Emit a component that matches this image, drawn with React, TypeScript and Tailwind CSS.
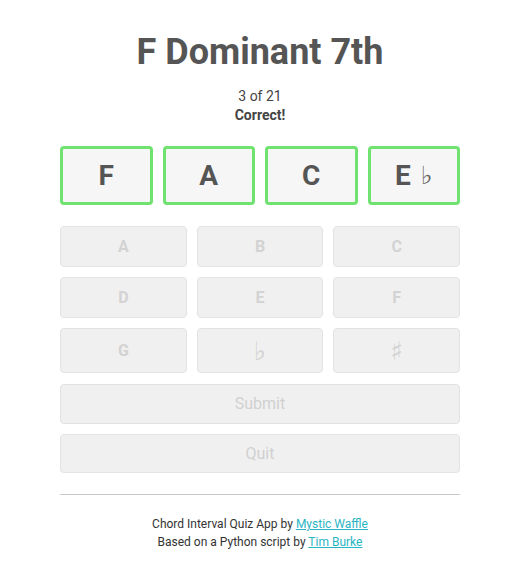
import React from "react";

const answers = ["F", "A", "C", "E"];

const choices = ["A", "B", "C", "D", "E", "F", "G", "♭", "♯"];

const App = () => {
  return (
    <div className="w-[520px] h-[580px] bg-white font-['Roboto',sans-serif] text-[#555]">
      <div className="w-[400px] mx-auto pt-[29px] flex flex-col items-center">
        <h1 className="text-[36px] leading-[46px] font-bold">F Dominant 7th</h1>
        <p className="mt-[12px] text-[14px] leading-[19px] text-[#444]">3 of 21</p>
        <p className="text-[14px] leading-[19px] font-bold text-[#444]">Correct!</p>

        {/* Answer slots */}
        <div className="mt-[21px] w-full grid grid-cols-4 gap-[10px]">
          {answers.map((a, i) => (
            <div
              key={i}
              className="h-[59px] flex items-center justify-center bg-[#f6f6f6] border-[3px] border-[#6fe26f] rounded-[4px] text-[28px] font-bold"
            >
              {a}
              {a === "E" && (
                <span className="ml-[10px] leading-none text-[25px] font-normal font-['DejaVu_Sans',sans-serif] text-[#666]">♭</span>
              )}
            </div>
          ))}
        </div>

        {/* Note buttons */}
        <div className="mt-[21px] w-full grid grid-cols-3 gap-[10px]">
          {choices.map((c, i) => (
            <button
              key={i}
              disabled
              className={`${i >= 6 ? "h-[45px]" : "h-[41px]"} flex items-center justify-center bg-[#f0f0f0] border border-[#e3e3e3] rounded-[4px] text-[16px] font-bold text-[#d3d3d3]`}
            >
              {c === "♭" || c === "♯" ? (
                <span className="font-['DejaVu_Sans',sans-serif] font-normal leading-none text-[26px]">{c}</span>
              ) : (
                c
              )}
            </button>
          ))}
        </div>

        <button
          disabled
          className="mt-[11px] w-full h-[40px] bg-[#f0f0f0] border border-[#e3e3e3] rounded-[4px] text-[16px] text-[#d0d0d0]"
        >
          Submit
        </button>
        <button
          disabled
          className="mt-[10px] w-full h-[39px] bg-[#f0f0f0] border border-[#e3e3e3] rounded-[4px] text-[16px] text-[#d0d0d0]"
        >
          Quit
        </button>

        <hr className="mt-[21px] w-full border-t border-[#c8c8c8]" />

        <div className="mt-[20px] text-[12px] leading-[18px] text-[#333] text-center">
          <p>
            Chord Interval Quiz App by{" "}
            <a href="#" className="text-[#2ab4c4] underline">Mystic Waffle</a>
          </p>
          <p>
            Based on a Python script by{" "}
            <a href="#" className="text-[#2ab4c4] underline">Tim Burke</a>
          </p>
        </div>
      </div>
    </div>
  );
};

export default App;
